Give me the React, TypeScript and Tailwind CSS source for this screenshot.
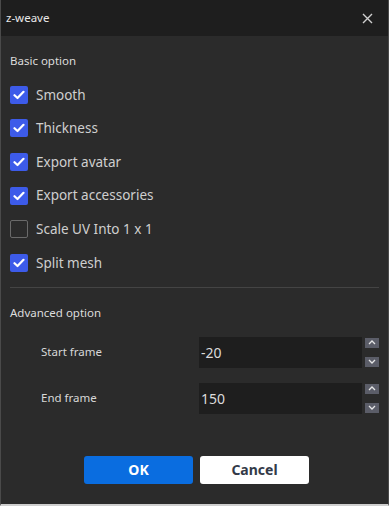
import { FC } from 'react';

type CheckRowProps = {
  label: string;
  checked: boolean;
};

const CheckRow: FC<CheckRowProps> = ({ label, checked }) => (
  <div className="flex h-[33.6px] items-center">
    {checked ? (
      <span className="flex h-[18px] w-[18px] items-center justify-center rounded-[2px] bg-[#3d5be9]">
        <svg width="12" height="10" viewBox="0 0 12 10" fill="none">
          <path
            d="M1.5 5.2 4.5 8 10.5 1.8"
            stroke="#fff"
            strokeWidth="2.2"
            strokeLinecap="round"
            strokeLinejoin="round"
          />
        </svg>
      </span>
    ) : (
      <span className="h-[18px] w-[18px] rounded-[2px] border border-[#6a6a6a] bg-[#2b2b2b]" />
    )}
    <span className="ml-[8px] text-[13.5px] text-[#cfcfcf]">{label}</span>
  </div>
);

const Chevron: FC<{ up?: boolean }> = ({ up }) => (
  <svg width="8" height="5" viewBox="0 0 8 5" fill="none">
    <path
      d={up ? 'M1 4 4 1 7 4' : 'M1 1 4 4 7 1'}
      stroke="#e6e6e6"
      strokeWidth="1.3"
    />
  </svg>
);

type SpinRowProps = {
  label: string;
  value: string;
};

const SpinRow: FC<SpinRowProps> = ({ label, value }) => (
  <div className="flex h-[31px] items-center">
    <span className="w-[191px] pl-[31px] text-[11.5px] text-[#d8d8d8]">
      {label}
    </span>
    <div className="flex h-full w-[165px] items-center bg-[#1e1e1e] pl-[2px] text-[14px] text-[#dcdcdc]">
      {value}
    </div>
    <div className="ml-[3px] flex h-full flex-col justify-between py-[1px]">
      <span className="flex h-[10px] w-[14px] items-center justify-center bg-[#5b5d68]">
        <Chevron up />
      </span>
      <span className="flex h-[10px] w-[14px] items-center justify-center bg-[#5b5d68]">
        <Chevron />
      </span>
    </div>
  </div>
);

export default function App() {
  const options = [
    { label: 'Smooth', checked: true },
    { label: 'Thickness', checked: true },
    { label: 'Export avatar', checked: true },
    { label: 'Export accessories', checked: true },
    { label: 'Scale UV Into 1 x 1', checked: false },
    { label: 'Split mesh', checked: true },
  ];

  return (
    <div
      className="flex h-[506px] w-[389px] flex-col border-x border-b-2 border-x-[#4a4a4a] border-b-[#cfcfcf] bg-[#2b2b2b]"
      style={{ fontFamily: '"Noto Sans", "Open Sans", sans-serif' }}
    >
      <div className="flex h-[36px] shrink-0 items-center justify-between bg-[#1e1e1e] pl-[5px] pr-[15px]">
        <span className="text-[11.5px] text-[#e8e8e8]">z-weave</span>
        <svg width="11" height="11" viewBox="0 0 11 11" fill="none">
          <path d="M1 1 10 10M10 1 1 10" stroke="#d0d0d0" strokeWidth="1.4" />
        </svg>
      </div>

      <div className="flex flex-col px-[9px]">
        <div className="mt-[16px] h-[18px] text-[11.5px] leading-[18px] text-[#dcdcdc]">
          Basic option
        </div>
        <div className="mt-[8px] flex flex-col">
          {options.map((o) => (
            <CheckRow key={o.label} label={o.label} checked={o.checked} />
          ))}
        </div>
        <div className="mt-[7px] h-px w-full bg-[#444]" />
        <div className="mt-[16px] h-[18px] text-[11.5px] leading-[18px] text-[#dcdcdc]">
          Advanced option
        </div>
        <div className="mt-[15px] flex flex-col gap-[15px]">
          <SpinRow label="Start frame" value="-20" />
          <SpinRow label="End frame" value="150" />
        </div>
      </div>

      <div className="mt-[42px] flex gap-[7px] pl-[83px]">
        <button className="h-[28px] w-[109px] rounded-[3px] bg-[#0a6de0] text-[14px] font-bold text-white">
          OK
        </button>
        <button className="h-[28px] w-[109px] rounded-[3px] bg-white text-[14px] font-bold text-[#333a48]">
          Cancel
        </button>
      </div>
    </div>
  );
}
